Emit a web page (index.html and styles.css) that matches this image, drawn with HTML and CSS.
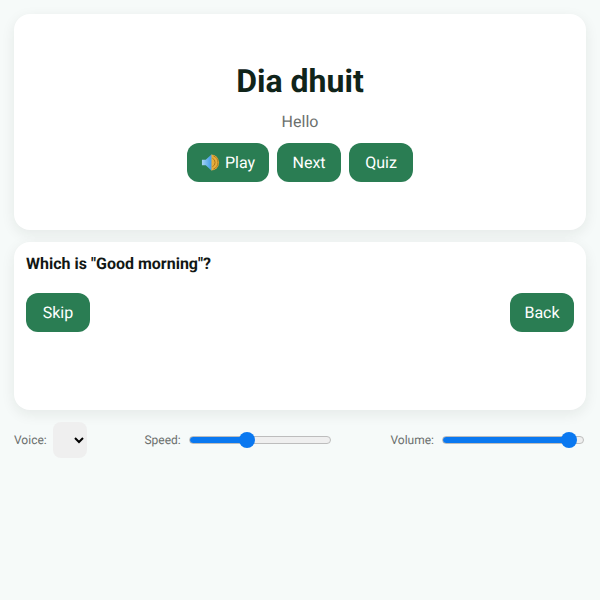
FILE: index.html
```html
<!DOCTYPE html>
<html lang="en">

<head>
    <meta charset="UTF-8">
    <meta name="viewport" content="width=device-width, initial-scale=1.0">
    <title>Irish Phrases</title>
    <link rel="stylesheet" href="styles.css">
</head>

<body>
    <div class="card phrase-card">
        <h1 class="phrase">Dia dhuit</h1>
        <p class="translation">Hello</p>
        <div class="actions">
            <button class="btn" type="button">
                <svg class="speaker" viewBox="0 0 20 20" aria-hidden="true">
                    <defs>
                        <linearGradient id="cone" x1="0" x2="1" y1="0" y2="0">
                            <stop offset="0" stop-color="#a6d3f3" />
                            <stop offset="1" stop-color="#3f9be8" />
                        </linearGradient>
                    </defs>
                    <path d="M10.5 1.5a8.5 8.5 0 0 1 0 17z" fill="#e6ad3c" />
                    <path d="M12 5.5a5 5 0 0 1 0 9" fill="none" stroke="#a8741c" stroke-width="1" />
                    <path d="M13 3a7.5 7.5 0 0 1 0 14" fill="none" stroke="#a8741c" stroke-width="1" />
                    <path d="M1 7h4l6-5.5v17L5 13H1z" fill="url(#cone)" />
                </svg>
                Play
            </button>
            <button class="btn" type="button">Next</button>
            <button class="btn" type="button">Quiz</button>
        </div>
    </div>

    <div class="card quiz-card">
        <div class="question">Which is "Good morning"?</div>
        <div class="quiz-actions">
            <button class="btn" type="button">Skip</button>
            <button class="btn" type="button">Back</button>
        </div>
    </div>

    <div class="controls">
        <label class="control">Voice:
            <select class="voice-select"></select>
        </label>
        <label class="control">Speed:
            <input class="slider speed" type="range" min="0" max="100" value="40">
        </label>
        <label class="control">Volume:
            <input class="slider volume" type="range" min="0" max="100" value="95">
        </label>
    </div>
</body>

</html>
```

FILE: styles.css
```css
* {
    margin: 0;
    padding: 0;
    box-sizing: border-box;
    font-family: Roboto, 'Liberation Sans', sans-serif;
    text-rendering: geometricPrecision;
}

:root {
    --green: #2a7d53;
    --ink: #10241a;
    --muted: #6b6f6d;
    --bg: #f6faf9;
    --blue: #0a78f0;
}

body {
    background: var(--bg);
    min-height: 100vh;
    padding: 14px;
}

.card {
    background: white;
    border-radius: 16px;
    box-shadow: 0 4px 14px rgba(20, 40, 30, 0.08);
}

.phrase-card {
    height: 216px;
    padding-top: 46px;
    text-align: center;
    margin-bottom: 12px;
}

.phrase {
    color: var(--ink);
    font-size: 32px;
    line-height: 42px;
    font-weight: 700;
    margin-bottom: 10px;
}

.translation {
    color: var(--muted);
    font-size: 16px;
    line-height: 19px;
    margin-bottom: 12px;
}

.actions {
    display: flex;
    justify-content: center;
    gap: 8px;
}

.btn {
    display: inline-flex;
    align-items: center;
    justify-content: center;
    min-width: 64px;
    height: 39px;
    padding: 0 14px;
    background: var(--green);
    color: white;
    border: none;
    border-radius: 12px;
    font-size: 16px;
}

.speaker {
    width: 19px;
    height: 19px;
    margin-right: 5px;
}

.quiz-card {
    height: 168px;
    padding: 12px;
    margin-bottom: 12px;
}

.question {
    color: #111714;
    font-size: 16px;
    line-height: 19px;
    font-weight: 700;
    margin-bottom: 20px;
}

.quiz-actions {
    display: flex;
    justify-content: space-between;
}

.controls {
    display: flex;
    justify-content: space-between;
    align-items: center;
    height: 36px;
}

.control {
    display: flex;
    align-items: center;
    gap: 6px;
    color: var(--muted);
    font-size: 12px;
}

.voice-select {
    width: 34px;
    height: 36px;
    background: #efefef;
    border: none;
    border-radius: 8px;
    color: black;
    font-size: 13px;
}

.slider {
    appearance: none;
    -webkit-appearance: none;
    width: 142px;
    height: 8px;
    margin: 2px;
    border: 1px solid #bdbdbd;
    border-radius: 4px;
    background: #efefef;
}

.slider.speed {
    background: linear-gradient(to right, var(--blue) 42%, #efefef 42%);
}

.slider.volume {
    background: linear-gradient(to right, var(--blue) 90%, #efefef 90%);
}

.slider::-webkit-slider-thumb {
    -webkit-appearance: none;
    width: 16px;
    height: 16px;
    border-radius: 50%;
    background: var(--blue);
}
```
